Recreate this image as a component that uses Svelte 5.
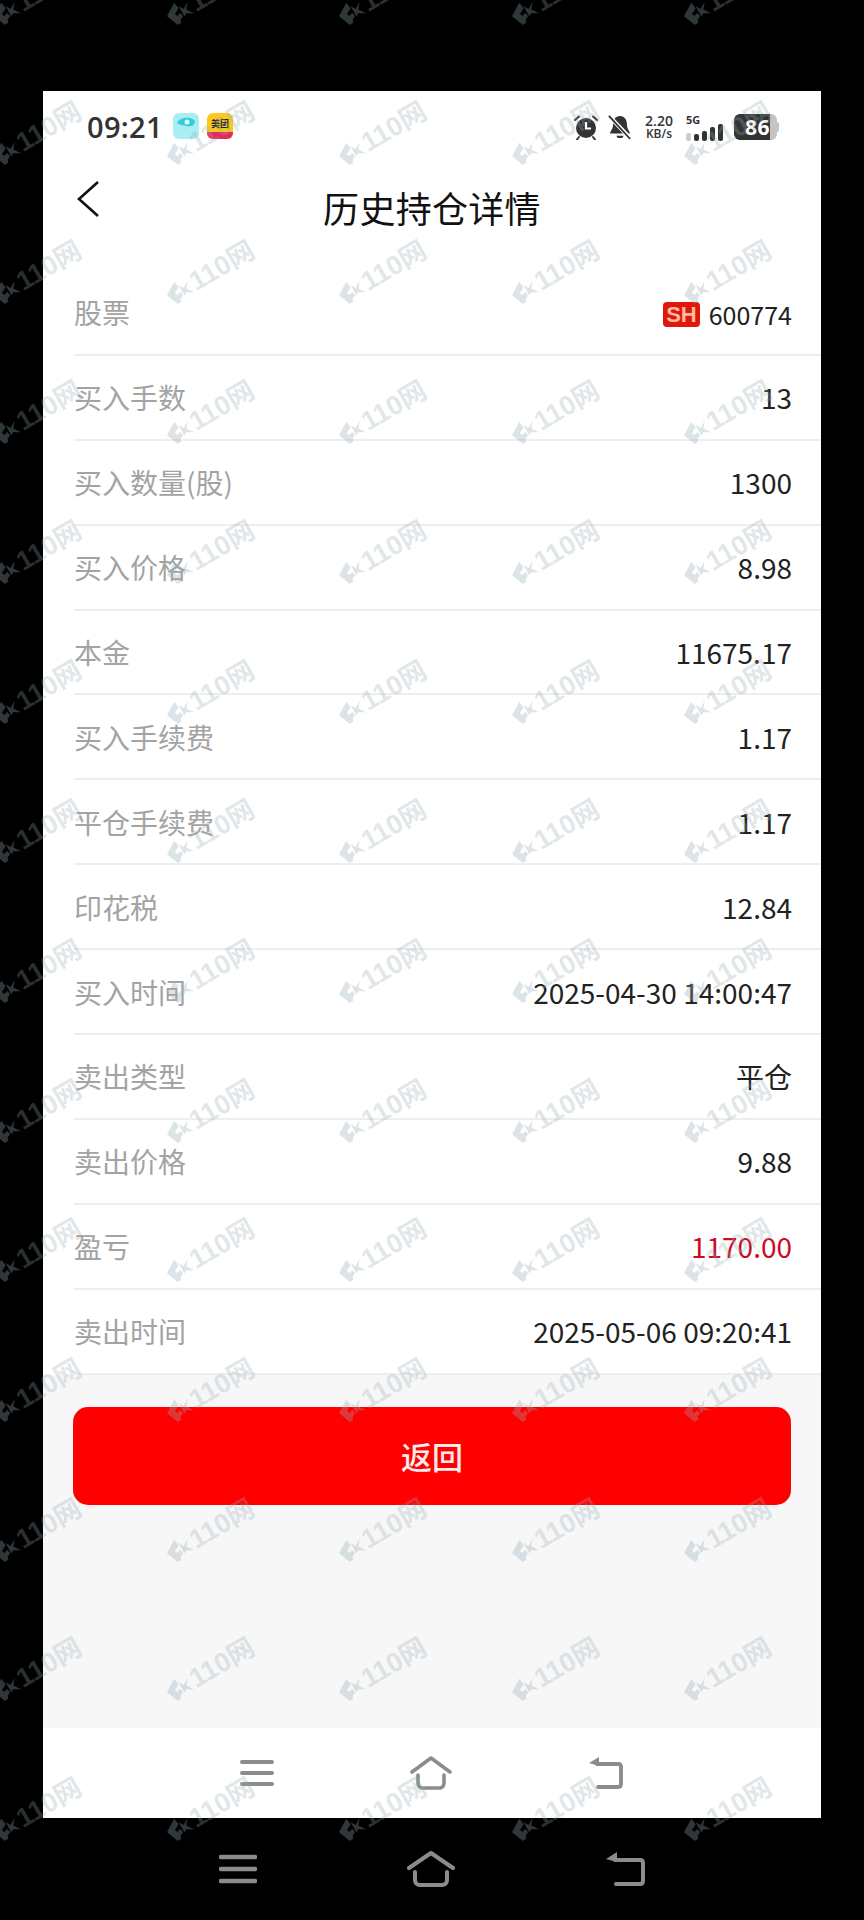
<script>
  const rows = [
    ["买入手数", "13"],
    ["买入数量(股)", "1300"],
    ["买入价格", "8.98"],
    ["本金", "11675.17"],
    ["买入手续费", "1.17"],
    ["平仓手续费", "1.17"],
    ["印花税", "12.84"],
    ["买入时间", "2025-04-30 14:00:47"],
    ["卖出类型", "平仓"],
    ["卖出价格", "9.88"],
    ["盈亏", "1170.00", true],
    ["卖出时间", "2025-05-06 09:20:41"],
  ];

  // Watermark grid, repeated over the whole picture
  const marks = [];
  for (let r = 0; r < 14; r++) {
    for (let c = 0; c < 5; c++) {
      marks.push({ x: 2 + c * 172.5, y: 2 + r * 139.7 });
    }
  }
</script>

<div class="screen">
  <div class="phone">
    <div class="status">
      <span class="clock">09:21</span>
      <svg class="app" viewBox="0 0 26 26">
        <rect width="26" height="26" rx="6" fill="#a8eef2" />
        <path d="M4 10c3-6 14-7 18-2 0 5-5 6-8 5-4-1-7-1-10-3z" fill="#2fd0dc" />
        <circle cx="14" cy="9" r="2.5" fill="#e8fbfc" />
      </svg>
      <svg class="app second" viewBox="0 0 26 26">
        <rect width="26" height="26" rx="6" fill="#fbc81e" />
        <path d="M0 19h26v1a6 6 0 0 1-6 6H6a6 6 0 0 1-6-6z" fill="#e8285a" />
        <text x="13" y="14" text-anchor="middle" class="meituan">美团</text>
      </svg>

      <div class="status-right">
        <svg class="sicon" viewBox="0 0 26 26">
          <circle cx="13" cy="14" r="10" fill="#333" />
          <path d="M13 8v6.5h5" fill="none" stroke="#fff" stroke-width="2.2" />
          <path d="M2 6l4-3.5M24 6l-4-3.5M6 23l-2 2.5M20 23l2 2.5" stroke="#333" stroke-width="2" stroke-linecap="round" />
        </svg>
        <svg class="sicon bell" viewBox="0 0 26 26">
          <path d="M13 1c5 0 7.500 4 7.500 9 0 5 2.500 7 3.500 10H2c1-3 3.500-5 3.500-10 0-5 2.500-9 7.500-9z" fill="#333" />
          <path d="M9 22.500h8l-1.500 2.500h-5z" fill="#333" />
          <path d="M2 2l22 23" stroke="#fff" stroke-width="4.500" />
          <path d="M1 1l23 25" stroke="#333" stroke-width="2" />
        </svg>
        <div class="speed"><b>2.20</b><span>KB/s</span></div>
        <div class="net">
          <span class="five">5G</span>
          <div class="bars">
            <i class="arrows"></i>
            <i style="height: 7px"></i>
            <i style="height: 10px"></i>
            <i style="height: 14px"></i>
            <i style="height: 17px"></i>
          </div>
        </div>
        <div class="battery"><span class="level">86</span><span class="rest"></span><span class="nub"></span></div>
      </div>
    </div>

    <header class="title">
      <svg class="back" viewBox="0 0 24 38">
        <path d="M22 2L3 19l19 17" fill="none" stroke="#111" stroke-width="2.600" />
      </svg>
      <h1>历史持仓详情</h1>
    </header>

    <div class="list">
      <div class="row first">
        <span class="label">股票</span>
        <span class="value stock"><em>SH</em>600774</span>
      </div>
      {#each rows as [label, value, red]}
        <div class="row">
          <span class="label">{label}</span>
          <span class="value" class:red>{value}</span>
        </div>
      {/each}
    </div>

    <div class="bottom">
      <button>返回</button>
    </div>

    <nav class="nav">
      <svg width="34" height="28" viewBox="0 0 34 28">
        <path d="M2 3h30M2 14h30M2 25h30" stroke="#8c8c8c" stroke-width="4" stroke-linecap="round" />
      </svg>
      <svg width="42" height="34" viewBox="0 0 42 34">
        <path d="M2 16L21 2l19 14" fill="none" stroke="#8c8c8c" stroke-width="3.600" stroke-linecap="round" stroke-linejoin="round" />
        <path d="M8 19v8c0 3 2 5 5 5h16c3 0 5-2 5-5v-8" fill="none" stroke="#8c8c8c" stroke-width="3.600" stroke-linecap="round" />
      </svg>
      <svg width="36" height="34" viewBox="0 0 36 34">
        <path d="M9 8h21c2 0 3 1 3 3v17c0 2-1 3-3 3H10" fill="none" stroke="#8c8c8c" stroke-width="3.800" stroke-linecap="round" />
        <path d="M11 1L1 7l10 3z" fill="#8c8c8c" />
      </svg>
    </nav>
  </div>

  <nav class="outer-nav">
    <svg width="38" height="30" viewBox="0 0 38 30">
      <path d="M2 3h34M2 15h34M2 27h34" stroke="#8c8c8c" stroke-width="4.500" stroke-linecap="round" />
    </svg>
    <svg width="48" height="36" viewBox="0 0 48 36">
      <path d="M2 17L24 2l22 15" fill="none" stroke="#8c8c8c" stroke-width="4" stroke-linecap="round" stroke-linejoin="round" />
      <path d="M8 21v8c0 3 2 5 5 5h22c3 0 5-2 5-5v-8" fill="none" stroke="#8c8c8c" stroke-width="4" stroke-linecap="round" />
    </svg>
    <svg width="40" height="36" viewBox="0 0 40 36">
      <path d="M10 9h25c2 0 3 1 3 3v18c0 2-1 3-3 3H11" fill="none" stroke="#8c8c8c" stroke-width="4" stroke-linecap="round" />
      <path d="M12 1L1 8l11 3z" fill="#8c8c8c" />
    </svg>
  </nav>

  {#each marks as m}
    <div class="mark" style="left: {m.x}px; top: {m.y}px">
      <svg width="26" height="22" viewBox="0 0 26 22">
        <path d="M0 9l13-8 1 7-6 3 1 3 4-1 1 4-4 2-1 3H5z" />
        <path d="M15 6l3 5 7-4-5 6 5 7-7-4-3 2z" />
      </svg>
      <span>110网</span>
    </div>
  {/each}
</div>

<style>
  :global(body) {
    margin: 0;
    background: #000;
  }

  .screen {
    position: relative;
    width: 864px;
    height: 1920px;
    overflow: hidden;
    background: #000;
    padding-top: 91px;
    box-sizing: border-box;
    font-family: "Noto Sans CJK SC", "Noto Sans", sans-serif;
  }

  .phone {
    width: 778px;
    height: 1727px;
    margin-left: 43px;
    background: #fff;
    display: flex;
    flex-direction: column;
  }

  .status {
    height: 66px;
    padding: 22px 42px 0 44px;
    box-sizing: border-box;
    display: flex;
    align-items: flex-start;
    flex-shrink: 0;
  }

  .clock {
    font-family: "Open Sans", sans-serif;
    font-size: 29px;
    line-height: 28px;
    font-weight: 600;
    color: #333;
    letter-spacing: 0.3px;
  }

  .app {
    width: 26px;
    height: 26px;
    margin-left: 10px;
  }

  .app.second {
    margin-left: 8px;
  }

  .meituan {
    font-size: 9px;
    font-weight: 700;
    fill: #222;
  }

  .status-right {
    margin-left: auto;
    display: flex;
    align-items: center;
    height: 28px;
  }

  .sicon {
    width: 26px;
    height: 26px;
  }

  .sicon.bell {
    margin-left: 9px;
    width: 24px;
  }

  .speed {
    margin-left: 10px;
    width: 34px;
    display: flex;
    flex-direction: column;
    align-items: center;
    color: #333;
    font-family: "Open Sans", sans-serif;
    line-height: 13px;
  }

  .speed b {
    font-size: 14px;
    font-weight: 600;
  }

  .speed span {
    font-size: 12px;
    font-weight: 600;
  }

  .net {
    margin-left: 10px;
    width: 40px;
    color: #333;
  }

  .five {
    display: block;
    font-family: "Open Sans", sans-serif;
    font-size: 11px;
    font-weight: 700;
    line-height: 12px;
  }

  .bars {
    display: flex;
    align-items: flex-end;
    gap: 3px;
    height: 17px;
    margin-top: -2px;
  }

  .bars i {
    width: 5px;
    background: #333;
    border-radius: 2px;
  }

  .bars .arrows {
    width: 5px;
    height: 8px;
    background: #ccc;
  }

  .battery {
    margin-left: 8px;
    display: flex;
    align-items: center;
    height: 26px;
  }

  .level {
    width: 36px;
    height: 26px;
    background: #333;
    color: #fff;
    border-radius: 6px 0 0 6px;
    font-family: "Open Sans", sans-serif;
    font-size: 21px;
    font-weight: 700;
    line-height: 26px;
    text-align: right;
    letter-spacing: 0.5px;
  }

  .rest {
    width: 7px;
    height: 26px;
    background: #c4c4c4;
    border-radius: 0 6px 6px 0;
  }

  .nub {
    width: 2px;
    height: 10px;
    background: #c4c4c4;
    border-radius: 0 2px 2px 0;
  }

  .title {
    position: relative;
    height: 114px;
    display: flex;
    align-items: center;
    justify-content: center;
    flex-shrink: 0;
  }

  .title h1 {
    margin: 0;
    font-size: 36px;
    font-weight: 400;
    color: #111;
    position: relative;
    top: -7px;
    letter-spacing: 0.300px;
  }

  .back {
    position: absolute;
    left: 33px;
    top: 23px;
    width: 24px;
    height: 38px;
  }

  .list {
    padding-left: 31px;
    flex-shrink: 0;
  }

  .row {
    height: 84.900px;
    box-sizing: border-box;
    border-bottom: 2px solid #eeeeee;
    padding-right: 29px;
    display: flex;
    align-items: center;
    justify-content: space-between;
  }

  .row.first {
    margin-top: 0;
  }

  .label {
    font-size: 28px;
    color: #a3a3a3;
  }

  .value {
    font-size: 28px;
    color: #222;
    font-family: "Noto Sans CJK SC", "Noto Sans", sans-serif;
  }

  .value.red {
    color: #cc0a1e;
  }

  .stock {
    display: flex;
    align-items: center;
    font-size: 25px;
    margin-top: 4px;
  }

  .stock em {
    font-style: normal;
    font-family: "Liberation Sans", sans-serif;
    font-weight: 700;
    font-size: 22px;
    line-height: 25px;
    color: #ffb9a0;
    background: #e0180c;
    border-radius: 4px;
    padding: 0 3px;
    margin-right: 9px;
  }

  .bottom {
    flex: 1;
    background: #f7f7f7;
    padding: 32px 30px 0;
  }

  button {
    width: 100%;
    height: 98px;
    border: none;
    border-radius: 15px;
    background: #ff0000;
    color: #fdeaea;
    font-family: inherit;
    font-size: 31px;
    font-weight: 500;
  }

  .nav {
    height: 90px;
    flex-shrink: 0;
    background: #fff;
    display: flex;
    align-items: center;
    justify-content: center;
    gap: 136px;
  }

  .outer-nav {
    height: 102px;
    display: flex;
    align-items: center;
    justify-content: center;
    gap: 150px;
  }

  .mark {
    position: absolute;
    display: flex;
    align-items: center;
    gap: 1px;
    transform: rotate(-30deg);
    transform-origin: left bottom;
    pointer-events: none;
    color: rgba(150, 172, 180, 0.28);
    font-family: "Liberation Sans", sans-serif;
    font-size: 27px;
    font-weight: 700;
    line-height: 28px;
    white-space: nowrap;
  }

  .mark svg {
    fill: rgba(150, 172, 180, 0.32);
  }

  .mark span {
    font-family: "Liberation Sans", "Noto Sans CJK SC", sans-serif;
  }
</style>
